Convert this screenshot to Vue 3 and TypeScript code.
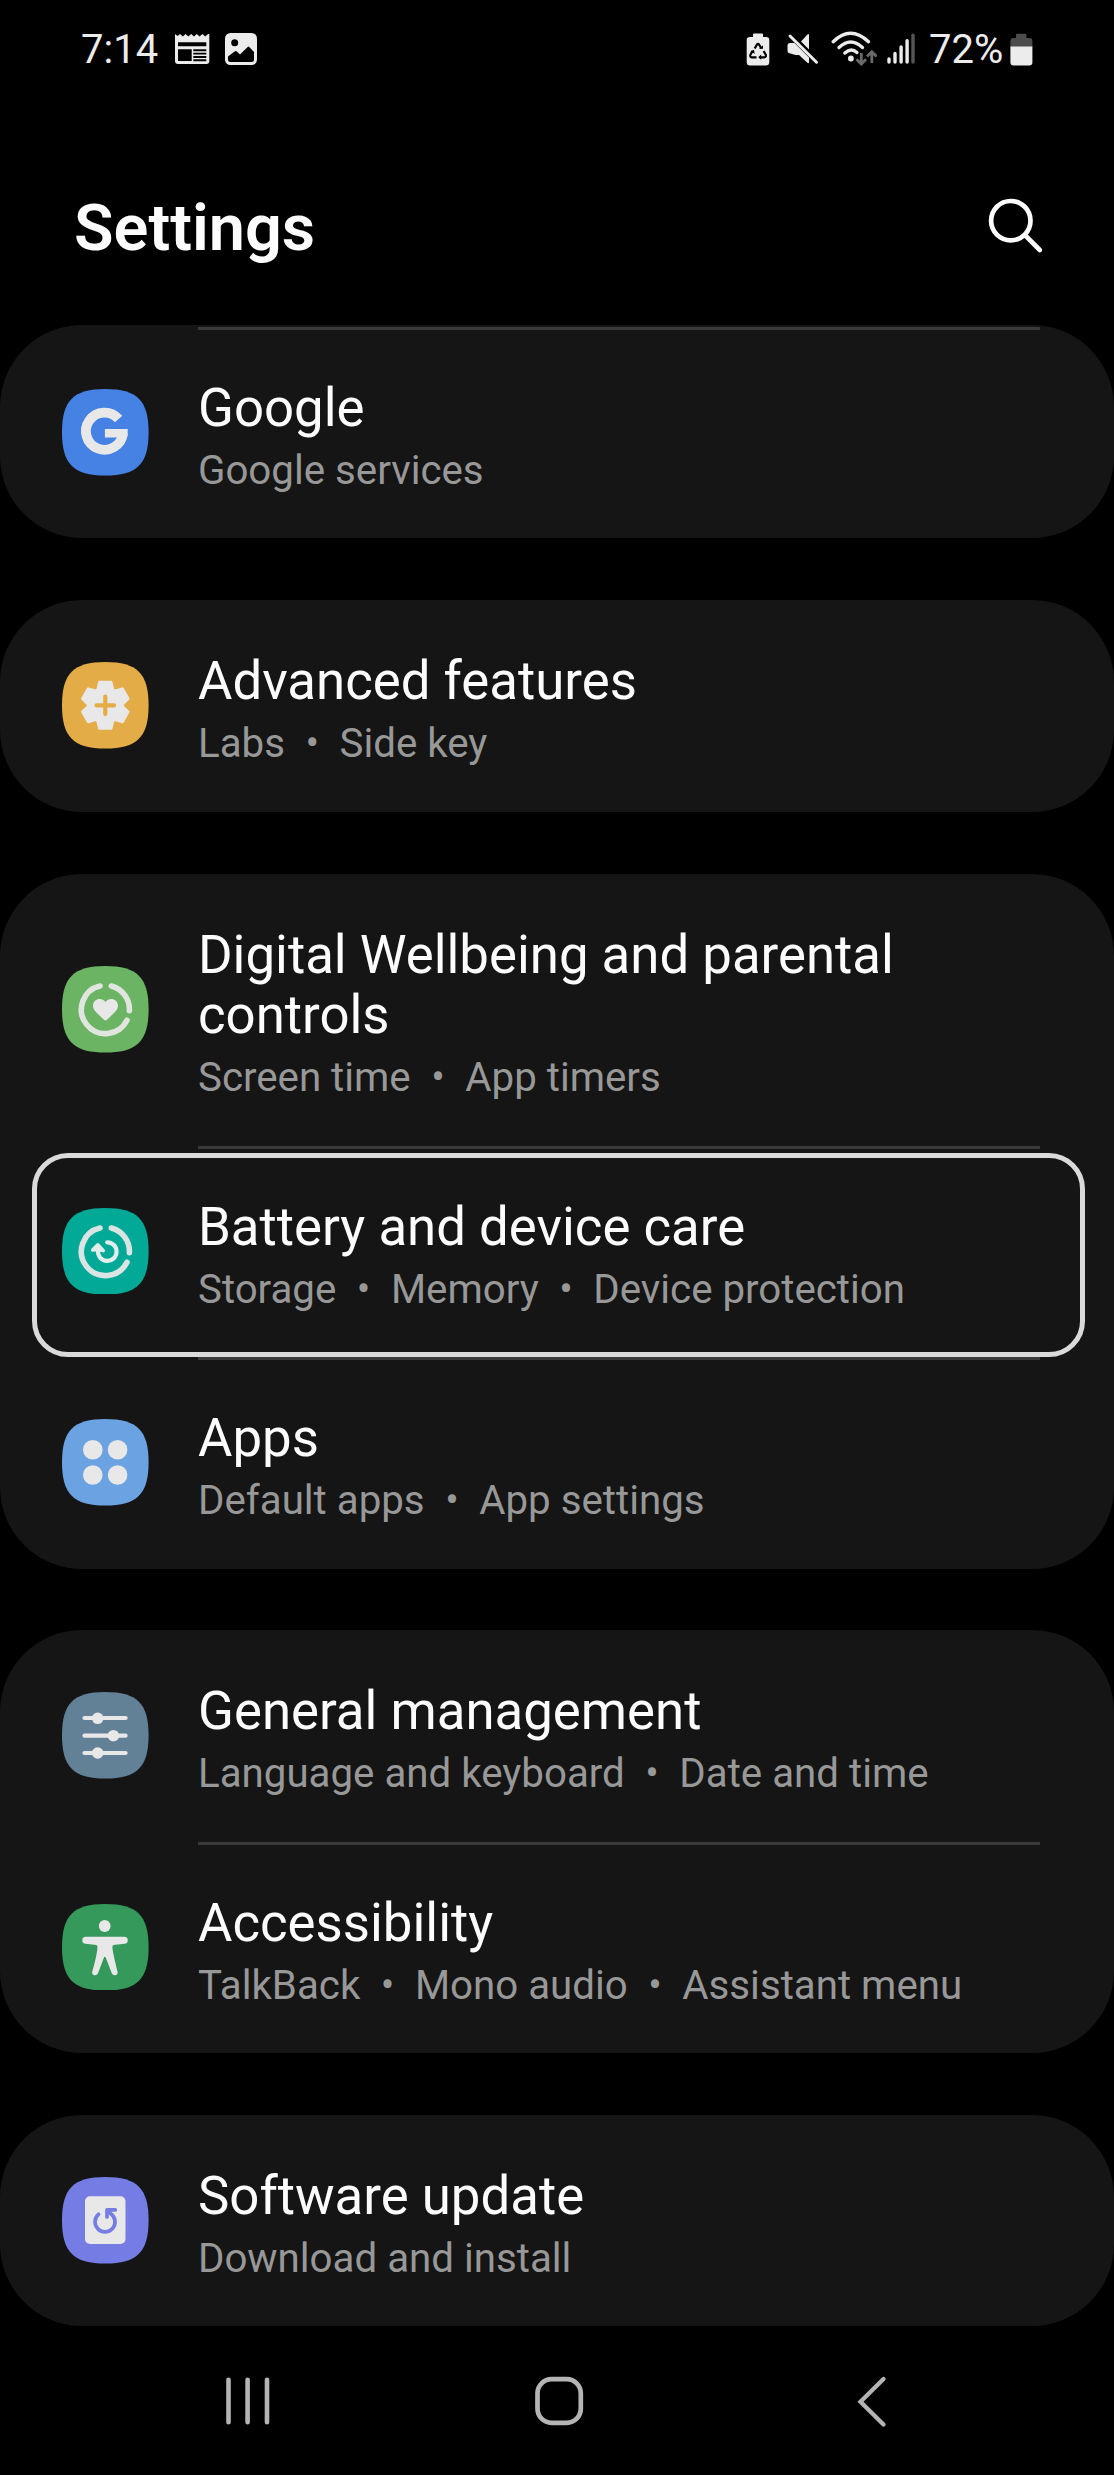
<script setup lang="ts">
type IconName =
  | 'google'
  | 'advanced'
  | 'wellbeing'
  | 'battery'
  | 'apps'
  | 'general'
  | 'accessibility'
  | 'update'

interface SettingItem {
  title: string
  details: string[]
  icon: IconName
  color: string
  divider?: boolean
  focused?: boolean
}

const groups: SettingItem[][] = [
  [{ title: 'Google', details: ['Google services'], icon: 'google', color: '#4681e4', divider: true }],
  [{ title: 'Advanced features', details: ['Labs', 'Side key'], icon: 'advanced', color: '#e4ac47' }],
  [
    {
      title: 'Digital Wellbeing and parental controls',
      details: ['Screen time', 'App timers'],
      icon: 'wellbeing',
      color: '#6bb463',
    },
    {
      title: 'Battery and device care',
      details: ['Storage', 'Memory', 'Device protection'],
      icon: 'battery',
      color: '#03a997',
      divider: true,
      focused: true,
    },
    { title: 'Apps', details: ['Default apps', 'App settings'], icon: 'apps', color: '#6ba2e2', divider: true },
  ],
  [
    {
      title: 'General management',
      details: ['Language and keyboard', 'Date and time'],
      icon: 'general',
      color: '#628197',
    },
    {
      title: 'Accessibility',
      details: ['TalkBack', 'Mono audio', 'Assistant menu'],
      icon: 'accessibility',
      color: '#35995c',
      divider: true,
    },
  ],
  [{ title: 'Software update', details: ['Download and install'], icon: 'update', color: '#757de5' }],
]

const teeth = [0, 60, 120, 180, 240, 300]
</script>

<template>
  <div class="screen">
    <header class="status">
      <span class="status-text time">7:14</span>
      <svg class="news" width="36" height="34" viewBox="0 0 36 34">
        <path
          fill="#ececec"
          fill-rule="evenodd"
          d="M1 2l2.5 2L6 2l2.8 2.4L11.600 2l2.800 2.400L17.200 2l2.800 2.400L22.800 2l2.800 2.400L28.400 2l2.800 2.400L34 2l1.300 0V29q0 3-3 3H4q-3 0-3-3zM4 10.200V14.300H32.300V10.200zM4 17.300V29H17.700V17.300zM19.300 17.300V19.200H32.300V17.300zM19.300 20.700V22.600H32.300V20.700zM19.300 24V25.900H32.300V24zM19.300 27.300V29.200H32.300V27.300z"
        />
      </svg>
      <svg class="photo" width="32" height="32" viewBox="0 0 32 32">
        <rect width="32" height="32" rx="5.500" fill="#ececec" />
        <circle cx="9.700" cy="9.700" r="3.500" fill="#000" />
        <path
          fill="#000"
          d="M3 23.500L10 18.200q.8-.6 1.500.1L15 21.600 22.700 14q.8-.8 1.600 0L29 18.900V26.500q0 2.500-2.500 2.500H5.500Q3 29 3 26.500z"
        />
      </svg>
      <span class="spacer"></span>
      <svg class="eco" width="24" height="33" viewBox="0 0 24 33">
        <path fill="#ececec" d="M7 4V1.500Q7 .5 8 .5h8q1 0 1 1V4h3q3.300 0 3.300 3.300V29q0 3.500-3.500 3.500H4Q.7 32.500.7 29V7.300Q.7 4 4 4z" />
        <g fill="none" stroke="#000" stroke-width="2.200">
          <path d="M8.700 15.500l2.100-3.700q1.200-1.700 2.400 0l2.200 3.700" />
          <path d="M17.600 18l2.100 3.600q.8 2.400-1.600 2.700h-4.400" />
          <path d="M10.500 24.300H5.900q-2.300-.4-1.500-2.700l2.300-3.800" />
        </g>
        <path d="M13 15.700h4v-3.500zM15.200 21.500v5.300l-3-2.600zM4.500 18.500l3.500-1.800.7 4z" fill="#000" />
      </svg>
      <svg class="mute" width="32" height="32" viewBox="0 0 32 32">
        <path fill="#ececec" d="M14 8.500L20.500 1.400Q22 .2 22 2.200V16.400zM3 10h4.500L22 24.500V29q0 2-1.600.8L12 22H8.500L1.700 20Q.5 19.500.5 18V12.500Q.5 10 3 10z" />
        <path d="M3 3L29.500 29.200" stroke="#ececec" stroke-width="3" stroke-linecap="round" />
      </svg>
      <svg class="wifi" width="46" height="36" viewBox="0 0 46 36">
        <g fill="none" stroke="#ececec" stroke-width="3.300" stroke-linecap="round">
          <path d="M2.200 10.700Q19.500-6.200 37.500 10.700" />
          <path d="M8 16.500Q19.700 5.500 31.500 16.500" />
          <path d="M13.800 22Q20 16.200 26 21.500" />
        </g>
        <circle cx="19.900" cy="27.500" r="2.900" fill="#ececec" />
        <g fill="none" stroke="#6a6a6a" stroke-width="2.800">
          <path d="M30.300 22v11M25.500 28.200l4.800 4.800 4.800-4.800M40.800 32V21M36 25.600l4.800-4.800 4.800 4.800" />
        </g>
      </svg>
      <svg class="signal" width="28" height="32" viewBox="0 0 28 32" stroke-width="3.400" stroke-linecap="round">
        <path stroke="#ececec" d="M2 26v3M8 20.500V29M14.100 14V29M20.100 7.700V29" />
        <path stroke="#555" d="M26 2.300V29" />
      </svg>
      <span class="status-text percent">72%</span>
      <svg class="cell" width="23" height="33" viewBox="0 0 23 33">
        <path fill="#4c4c4c" d="M6 5V2Q6 .8 7.200.8h8Q16.400.8 16.400 2V5h2.800Q22.400 5 22.400 8.200V14H.4V8.200Q.4 5 3.600 5z" />
        <path fill="#ececec" d="M.4 13.500h22V29.200q0 3.300-3.300 3.300H3.700Q.4 32.500.4 29.200z" />
      </svg>
    </header>

    <div class="title-bar">
      <h1>Settings</h1>
      <svg width="58" height="58" viewBox="0 0 58 58" fill="none" stroke="#fcfcfc" stroke-width="4.700">
        <circle cx="23.800" cy="23.700" r="19.700" />
        <path d="M38.200 38.400L52.800 53" stroke-linecap="round" />
      </svg>
    </div>

    <main>
      <section v-for="(group, g) in groups" :key="g" class="card" :class="{ cut: g === 0 }">
        <article
          v-for="item in group"
          :key="item.title"
          class="row"
          :class="{ divided: item.divider, focused: item.focused }"
        >
          <svg class="app-icon" viewBox="0 0 86.600 86.600">
            <path
              :fill="item.color"
              d="M0 43.300C0 11.500 11.500 0 43.300 0S86.600 11.500 86.600 43.300 75.100 86.600 43.300 86.600 0 75.100 0 43.300z"
            />
            <g v-if="item.icon === 'google'">
              <path d="M56.600 30A18.600 18.600 0 1 0 61 44.500" fill="none" stroke="#e8e8e8" stroke-width="9.800" />
              <path d="M42.900 39.900H65.700V44.500L65 48.600H42.900z" fill="#e8e8e8" />
            </g>
            <g v-else-if="item.icon === 'advanced'">
              <g fill="#e8e8e8" stroke="#e8e8e8" stroke-width="3" stroke-linejoin="round">
                <circle cx="43.300" cy="43.300" r="17" />
                <path
                  v-for="angle in teeth"
                  :key="angle"
                  :transform="`rotate(${angle} 43.3 43.3)`"
                  d="M37.600 20.300H49L51 28.500 54 32H32.600L35.600 28.500z"
                />
              </g>
              <path d="M43.300 34.500V52.100M34.500 43.300H52.100" stroke="#e4ac47" stroke-width="4.200" stroke-linecap="round" />
            </g>
            <g v-else-if="item.icon === 'wellbeing' || item.icon === 'battery'">
              <path
                d="M49.300 20A24.100 24.100 0 0 1 67.400 44.700M65 54.300A24.100 24.100 0 1 1 38 20"
                fill="none"
                stroke="#e8e8e8"
                stroke-opacity=".94"
                stroke-width="5.600"
                stroke-linecap="round"
              />
              <path
                v-if="item.icon === 'wellbeing'"
                fill="#e8e8e8"
                d="M43.500 36C40 31 31 32.500 31 40c0 4 4 7 11 13.800q1.500 1.500 3 0C52 47 56 44 56 40c0-7.500-9-9-12.500-4z"
              />
              <template v-else>
                <path
                  d="M45.200 34.300A9.300 9.300 0 1 1 36 43V40"
                  fill="none"
                  stroke="#e2eeec"
                  stroke-width="4.200"
                  stroke-linecap="round"
                />
                <path
                  d="M30.700 42L35.800 36.700 41.300 42.700 36 41.500z"
                  fill="#e2eeec"
                  stroke="#e2eeec"
                  stroke-width="3.400"
                  stroke-linejoin="round"
                />
              </template>
            </g>
            <g v-else-if="item.icon === 'apps'" fill="#e8e8e8">
              <circle cx="30.800" cy="30.800" r="9.800" />
              <circle cx="55.600" cy="30.800" r="9.800" />
              <circle cx="30.800" cy="56" r="9.800" />
              <circle cx="55.600" cy="56" r="9.800" />
            </g>
            <g v-else-if="item.icon === 'general'" fill="#e8e8e8">
              <path
                d="M22.500 26H63.600M22.500 43.700H63.600M22.500 61H63.600"
                stroke="#e8e8e8"
                stroke-width="4.200"
                stroke-linecap="round"
              />
              <circle cx="35.700" cy="26.300" r="5.800" />
              <circle cx="51.400" cy="43.700" r="5.800" />
              <circle cx="35.700" cy="61" r="5.800" />
            </g>
            <g v-else-if="item.icon === 'accessibility'" fill="#e8e8e8">
              <circle cx="42.700" cy="22" r="5.900" />
              <path
                d="M23.800 32.700H62.200Q65.800 32.700 65.800 36.200 65.800 39.300 62.400 39.700L51.500 40.900Q50.300 41.200 50.400 43.500 50.600 48 55.600 68 56 70.500 53.500 71.200 50.800 71.800 49.800 69.300L44 54.200Q42.800 51.500 41.700 54.200L36 69.300Q34.800 71.800 32.200 71.200 29.700 70.500 30.200 68 35.200 50 35.500 43.500 35.500 41.200 34.300 40.900L23.600 39.700Q20.300 39.300 20.300 36.200 20.300 32.700 23.800 32.700z"
              />
            </g>
            <g v-else>
              <rect x="23" y="19.300" width="40.500" height="47.700" rx="5" fill="#e8e8e8" />
              <path
                d="M36.500 37.300A10 10 0 1 0 48.500 36.500L45.500 33.700"
                fill="none"
                stroke="#757de5"
                stroke-width="3.700"
                stroke-linecap="round"
              />
              <path
                d="M53.300 32.900H45V40"
                fill="none"
                stroke="#757de5"
                stroke-width="3.700"
                stroke-linecap="round"
                stroke-linejoin="round"
              />
            </g>
          </svg>
          <div class="labels">
            <h2>{{ item.title }}</h2>
            <p>
              <template v-for="(detail, d) in item.details" :key="detail"
                ><span v-if="d > 0" class="dot">•</span><span>{{ detail }}</span></template
              >
            </p>
          </div>
        </article>
      </section>
    </main>

    <nav>
      <svg width="46" height="52" viewBox="0 0 46 52" stroke="#b4b4b4" stroke-width="4.600" stroke-linecap="round">
        <path d="M3.500 4.800V47.200M22.600 4.800V47.200M42 4.800V47.200" />
      </svg>
      <svg class="home" width="52" height="52" viewBox="0 0 52 52" fill="none" stroke="#b4b4b4" stroke-width="4.700">
        <rect x="4.500" y="4.200" width="43.300" height="43.600" rx="14" />
      </svg>
      <svg width="32" height="54" viewBox="0 0 32 54" fill="none" stroke="#b4b4b4" stroke-width="4.300" stroke-linecap="round">
        <path d="M28.500 5L5.500 27.700 28.500 50.500" />
      </svg>
    </nav>
  </div>
</template>

<style>
body {
  background: #000;
}
</style>

<style scoped>
.screen {
  width: 1114px;
  height: 2475px;
  overflow: hidden;
  display: flex;
  flex-direction: column;
  background: #000;
  color: #fcfcfc;
  font-family: Roboto, 'Liberation Sans', sans-serif;
}
svg {
  display: block;
  flex: none;
}
h1,
h2,
p {
  margin: 0;
}
.status {
  display: flex;
  align-items: center;
  height: 98px;
  box-sizing: border-box;
  padding: 0 81px;
}
.status-text {
  padding-top: 2px;
  font-size: 40px;
  line-height: 46px;
  color: #ececec;
}
.time {
  width: 78px;
  white-space: nowrap;
}
.news {
  margin-left: 15px;
}
.photo {
  margin-left: 15px;
}
.spacer {
  flex: 1;
}
.eco {
  margin-right: 17px;
}
.mute {
  margin-right: 12px;
}
.wifi {
  margin-right: 10px;
}
.signal {
  margin-right: 14px;
}
.percent {
  width: 76px;
  white-space: nowrap;
}
.cell {
  margin-left: 5px;
}
.title-bar {
  display: flex;
  justify-content: space-between;
  height: 227px;
  box-sizing: border-box;
  padding: 92px 69px 0 74px;
}
h1 {
  font-size: 64.800px;
  line-height: 76px;
  font-weight: 600;
}
.title-bar svg {
  margin-top: 7px;
}
main {
  display: flex;
  flex-direction: column;
  gap: 61.9px;
}
.card {
  border-radius: 82px;
  background: #151515;
}
.cut {
  padding-top: 2px;
}
.row {
  position: relative;
  display: flex;
  align-items: center;
  padding-left: 62px;
}
.divided::before {
  content: '';
  position: absolute;
  top: 0;
  left: 198px;
  right: 74px;
  height: 3px;
  background: #3a3a3a;
}
.focused {
  z-index: 1;
}
.focused::after {
  content: '';
  position: absolute;
  top: 7.300px;
  bottom: 0;
  left: 32px;
  right: 29px;
  border: 5px solid #dadada;
  border-radius: 36px;
}
.app-icon {
  width: 86.600px;
  height: 86.600px;
  margin-bottom: 0.800px;
}
.labels {
  width: 800px;
  margin-left: 49.400px;
  padding: 51px 0 44.600px;
}
h2 {
  font-size: 52.750px;
  line-height: 60.800px;
  font-weight: 400;
}
p {
  margin-top: 9px;
  font-size: 40.250px;
  line-height: 46px;
  color: #989898;
  white-space: nowrap;
}
.dot {
  margin: 0 20.500px;
}
nav {
  display: flex;
  align-items: center;
  flex: 1;
  padding-left: 225px;
}
.home {
  margin: 0 270px 0 262px;
}
</style>
